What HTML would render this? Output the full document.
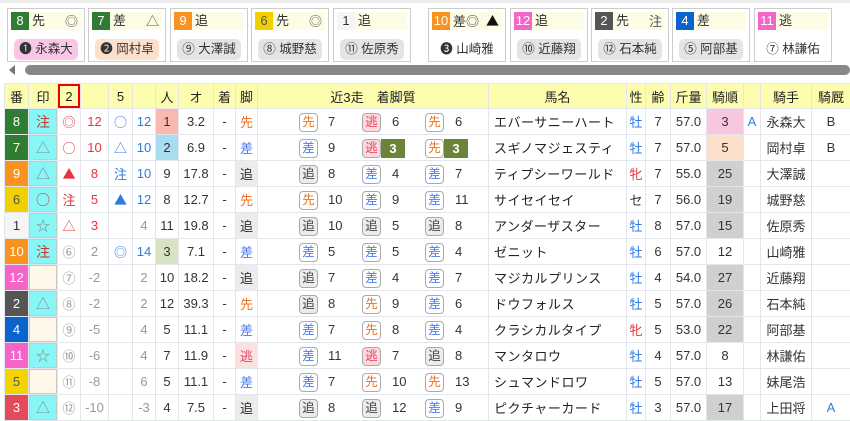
<!DOCTYPE html>
<html><head><meta charset="utf-8"><style>
*{box-sizing:border-box;margin:0;padding:0}
body{width:850px;height:420px;overflow:hidden;background:#fff;font-family:"Liberation Sans","Noto Sans CJK JP",sans-serif;color:#333;position:relative;font-size:13px}
.j{font-family:"Noto Sans CJK JP",sans-serif}
.topline{position:absolute;left:0;top:0;width:850px;height:3px;background:#eee}
.card{position:absolute;top:8px;width:78px;height:54px;border:1px solid #ccc;background:#fff}
.card .hd{position:absolute;left:3px;top:3px;width:70px;height:18px;background:#fdfde6;font-size:13px;line-height:18px}
.card .n{display:inline-block;width:18px;height:18px;text-align:center;color:#fff;margin-right:3px;vertical-align:top}
.card .m{position:absolute;right:3px;top:0;color:#555;font-family:"Noto Sans CJK JP",sans-serif}
.card .p{position:absolute;top:30px;left:0;right:0;margin:auto;width:fit-content;padding:0 5px;height:21px;line-height:21px;border-radius:5px;font-size:12.5px;color:#333}
.sb{position:absolute;left:25px;top:65px;width:825px;height:10px;background:#888;border-radius:5px}
.arr{position:absolute;left:9px;top:65px;width:0;height:0;border-top:5px solid transparent;border-bottom:5px solid transparent;border-right:6px solid #777}
table{position:absolute;left:4px;top:83px;border-collapse:collapse;table-layout:fixed;width:845px}
td,th{border:1px solid #e3e6ec;text-align:center;height:26px;padding:0;font-weight:normal;font-size:13px;white-space:nowrap;overflow:visible}
th{background:#fdfdb0;height:25px;color:#222}
td.nm{text-align:left;padding-left:5px;color:#222;letter-spacing:.5px}
td.g{color:#fff}
.mk{background:#86f6f6;box-shadow:inset 0 0 0 1px #b8d0c8;color:#888;font-family:"Noto Sans CJK JP",sans-serif;font-size:14px}
.mkb{background:#fdf8ea;box-shadow:inset 0 0 0 1px #cfc8b8}
.r{color:#e8323c}.b{color:#2f7ae5}.gr{color:#999}.o{color:#f07020}.bl{color:#4a7af0}.pk{color:#e04a6a}.bc{color:#c0392b}
.rc{position:relative}
.bd{position:absolute;top:4px;width:19px;height:19px;border:1px solid #aaa;border-radius:4px;line-height:17px;font-size:12.5px;background:#fff}
.bd.t{background:#ececec;color:#444}.bd.e{background:#fdd8dc;color:#e04a6a}.bd.s{color:#f07020}.bd.c{color:#4a7af0}
.num{position:absolute;top:0;line-height:26px}
.gb{position:absolute;top:4px;width:24px;height:19px;background:#6a843a;color:#fff;font-weight:bold;line-height:19px}
</style></head><body>
<div class="topline"></div>
<div class="card" style="left:7px"><div class="hd"><span class="n" style="background:#2e7d32">8</span>先<span class="m">◎</span></div><div class="p" style="background:#f9c6e6">❶ 永森大</div></div>
<div class="card" style="left:88px"><div class="hd"><span class="n" style="background:#2e7d32">7</span>差<span class="m">△</span></div><div class="p" style="background:#fde0cc">❷ 岡村卓</div></div>
<div class="card" style="left:170px"><div class="hd"><span class="n" style="background:#f7931e">9</span>追</div><div class="p" style="background:#e4e4e4">⑨ 大澤誠</div></div>
<div class="card" style="left:251px"><div class="hd"><span class="n" style="background:#f0d000;color:#555">6</span>先<span class="m">◎</span></div><div class="p" style="background:#e4e4e4">⑧ 城野慈</div></div>
<div class="card" style="left:333px"><div class="hd"><span class="n" style="background:#f5f5f5;color:#333">1</span>追</div><div class="p" style="background:#e4e4e4">⑪ 佐原秀</div></div>
<div class="card" style="left:428px"><div class="hd"><span class="n" style="background:#f7931e">10</span>差<span class="j">◎</span><span class="m" style="color:#111">▲</span></div><div class="p">❸ 山崎雅</div></div>
<div class="card" style="left:510px"><div class="hd"><span class="n" style="background:#f564c8">12</span>追</div><div class="p" style="background:#e4e4e4">⑩ 近藤翔</div></div>
<div class="card" style="left:591px"><div class="hd"><span class="n" style="background:#555">2</span>先<span class="m">注</span></div><div class="p" style="background:#e4e4e4">⑫ 石本純</div></div>
<div class="card" style="left:672px"><div class="hd"><span class="n" style="background:#0b63ce">4</span>差</div><div class="p" style="background:#e4e4e4">⑤ 阿部基</div></div>
<div class="card" style="left:754px"><div class="hd"><span class="n" style="background:#f564c8">11</span>逃</div><div class="p">⑦ 林謙佑</div></div>
<div class="arr"></div><div class="sb"></div>
<table>
<colgroup><col style="width:24px"><col style="width:29px"><col style="width:23px"><col style="width:28px"><col style="width:24px"><col style="width:23px"><col style="width:23px"><col style="width:35px"><col style="width:22px"><col style="width:22px"><col style="width:231px"><col style="width:138px"><col style="width:19px"><col style="width:25px"><col style="width:36px"><col style="width:37px"><col style="width:17px"><col style="width:51px"><col style="width:39px"></colgroup>
<tr><th>番</th><th>印</th><th style="box-shadow:inset 0 0 0 2px #e00">2</th><th></th><th>5</th><th></th><th>人</th><th>オ</th><th>着</th><th>脚</th><th>近3走　着脚質</th><th>馬名</th><th>性</th><th>齢</th><th>斤量</th><th>騎順</th><th></th><th>騎手</th><th>騎厩</th></tr>
<tr><td class="g" style="background:#2e7d32">8</td><td class="mk bc">注</td><td class="r j">◎</td><td class="r">12</td><td class="b j">○</td><td class="b">12</td><td style="background:#f9b9b0">1</td><td>3.2</td><td>-</td><td class="o">先</td><td class="rc"><div class="bd s" style="left:41px">先</div><div class="num" style="left:70px">7</div><div class="bd e" style="left:104px">逃</div><div class="num" style="left:134px">6</div><div class="bd s" style="left:167px">先</div><div class="num" style="left:197px">6</div></td><td class="nm">エバーサニーハート</td><td class="b">牡</td><td>7</td><td>57.0</td><td style="background:#f9c6e0">3</td><td class="b">A</td><td>永森大</td><td>B</td></tr>
<tr><td class="g" style="background:#2e7d32">7</td><td class="mk">△</td><td class="r j">○</td><td class="r">10</td><td class="b j">△</td><td class="b">10</td><td style="background:#a8dcf0">2</td><td>6.9</td><td>-</td><td class="bl">差</td><td class="rc"><div class="bd c" style="left:41px">差</div><div class="num" style="left:70px">9</div><div class="bd e" style="left:104px">逃</div><div class="gb" style="left:123px">3</div><div class="bd s" style="left:167px">先</div><div class="gb" style="left:186px">3</div></td><td class="nm">スギノマジェスティ</td><td class="b">牡</td><td>7</td><td>57.0</td><td style="background:#fde0cc">5</td><td></td><td>岡村卓</td><td>B</td></tr>
<tr><td class="g" style="background:#f7931e">9</td><td class="mk">△</td><td class="r j">▲</td><td class="r">8</td><td class="b">注</td><td class="b">10</td><td>9</td><td>17.8</td><td>-</td><td style="background:#ececec">追</td><td class="rc"><div class="bd t" style="left:41px">追</div><div class="num" style="left:70px">8</div><div class="bd c" style="left:104px">差</div><div class="num" style="left:134px">4</div><div class="bd c" style="left:167px">差</div><div class="num" style="left:197px">7</div></td><td class="nm">ティプシーワールド</td><td class="r">牝</td><td>7</td><td>55.0</td><td style="background:#d0d0d0">25</td><td></td><td>大澤誠</td><td></td></tr>
<tr><td style="background:#f0d000;color:#555">6</td><td class="mk bc">○</td><td class="r">注</td><td class="r">5</td><td class="b j">▲</td><td class="b">12</td><td>8</td><td>12.7</td><td>-</td><td class="o">先</td><td class="rc"><div class="bd s" style="left:41px">先</div><div class="num" style="left:70px">10</div><div class="bd c" style="left:104px">差</div><div class="num" style="left:134px">9</div><div class="bd c" style="left:167px">差</div><div class="num" style="left:197px">11</div></td><td class="nm">サイセイセイ</td><td>セ</td><td>7</td><td>56.0</td><td style="background:#d0d0d0">19</td><td></td><td>城野慈</td><td></td></tr>
<tr><td style="background:#f5f5f5">1</td><td class="mk">☆</td><td class="r j">△</td><td class="r">3</td><td></td><td class="gr">4</td><td>11</td><td>19.8</td><td>-</td><td style="background:#ececec">追</td><td class="rc"><div class="bd t" style="left:41px">追</div><div class="num" style="left:70px">10</div><div class="bd t" style="left:104px">追</div><div class="num" style="left:134px">5</div><div class="bd t" style="left:167px">追</div><div class="num" style="left:197px">8</div></td><td class="nm">アンダーザスター</td><td class="b">牡</td><td>8</td><td>57.0</td><td style="background:#d0d0d0">15</td><td></td><td>佐原秀</td><td></td></tr>
<tr><td class="g" style="background:#f7931e">10</td><td class="mk bc">注</td><td class="gr">⑥</td><td class="gr">2</td><td class="b j">◎</td><td class="b">14</td><td style="background:#d7e3c3">3</td><td>7.1</td><td>-</td><td class="bl">差</td><td class="rc"><div class="bd c" style="left:41px">差</div><div class="num" style="left:70px">5</div><div class="bd c" style="left:104px">差</div><div class="num" style="left:134px">5</div><div class="bd c" style="left:167px">差</div><div class="num" style="left:197px">4</div></td><td class="nm">ゼニット</td><td class="b">牡</td><td>6</td><td>57.0</td><td>12</td><td></td><td>山崎雅</td><td></td></tr>
<tr><td class="g" style="background:#f564c8">12</td><td class="mkb"></td><td class="gr">⑦</td><td class="gr">-2</td><td></td><td class="gr">2</td><td>10</td><td>18.2</td><td>-</td><td style="background:#ececec">追</td><td class="rc"><div class="bd t" style="left:41px">追</div><div class="num" style="left:70px">7</div><div class="bd c" style="left:104px">差</div><div class="num" style="left:134px">4</div><div class="bd c" style="left:167px">差</div><div class="num" style="left:197px">7</div></td><td class="nm">マジカルプリンス</td><td class="b">牡</td><td>4</td><td>54.0</td><td style="background:#d0d0d0">27</td><td></td><td>近藤翔</td><td></td></tr>
<tr><td class="g" style="background:#555">2</td><td class="mk">△</td><td class="gr">⑧</td><td class="gr">-2</td><td></td><td class="gr">2</td><td>12</td><td>39.3</td><td>-</td><td class="o">先</td><td class="rc"><div class="bd t" style="left:41px">追</div><div class="num" style="left:70px">8</div><div class="bd s" style="left:104px">先</div><div class="num" style="left:134px">9</div><div class="bd c" style="left:167px">差</div><div class="num" style="left:197px">6</div></td><td class="nm">ドウフォルス</td><td class="b">牡</td><td>5</td><td>57.0</td><td style="background:#d0d0d0">26</td><td></td><td>石本純</td><td></td></tr>
<tr><td class="g" style="background:#0b63ce">4</td><td class="mkb"></td><td class="gr">⑨</td><td class="gr">-5</td><td></td><td class="gr">4</td><td>5</td><td>11.1</td><td>-</td><td class="bl">差</td><td class="rc"><div class="bd c" style="left:41px">差</div><div class="num" style="left:70px">7</div><div class="bd s" style="left:104px">先</div><div class="num" style="left:134px">8</div><div class="bd c" style="left:167px">差</div><div class="num" style="left:197px">4</div></td><td class="nm">クラシカルタイプ</td><td class="r">牝</td><td>5</td><td>53.0</td><td style="background:#d0d0d0">22</td><td></td><td>阿部基</td><td></td></tr>
<tr><td class="g" style="background:#f564c8">11</td><td class="mk">☆</td><td class="gr">⑩</td><td class="gr">-6</td><td></td><td class="gr">4</td><td>7</td><td>11.9</td><td>-</td><td class="pk" style="background:#fde0e0">逃</td><td class="rc"><div class="bd c" style="left:41px">差</div><div class="num" style="left:70px">11</div><div class="bd e" style="left:104px">逃</div><div class="num" style="left:134px">7</div><div class="bd t" style="left:167px">追</div><div class="num" style="left:197px">8</div></td><td class="nm">マンタロウ</td><td class="b">牡</td><td>4</td><td>57.0</td><td>8</td><td></td><td>林謙佑</td><td></td></tr>
<tr><td style="background:#f4d400;color:#555">5</td><td class="mkb"></td><td class="gr">⑪</td><td class="gr">-8</td><td></td><td class="gr">6</td><td>5</td><td>11.1</td><td>-</td><td class="bl">差</td><td class="rc"><div class="bd c" style="left:41px">差</div><div class="num" style="left:70px">7</div><div class="bd s" style="left:104px">先</div><div class="num" style="left:134px">10</div><div class="bd s" style="left:167px">先</div><div class="num" style="left:197px">13</div></td><td class="nm">シュマンドロワ</td><td class="b">牡</td><td>5</td><td>57.0</td><td>13</td><td></td><td>妹尾浩</td><td></td></tr>
<tr><td class="g" style="background:#e74a5a">3</td><td class="mk">△</td><td class="gr">⑫</td><td class="gr">-10</td><td></td><td class="gr">-3</td><td>4</td><td>7.5</td><td>-</td><td style="background:#ececec">追</td><td class="rc"><div class="bd t" style="left:41px">追</div><div class="num" style="left:70px">8</div><div class="bd t" style="left:104px">追</div><div class="num" style="left:134px">12</div><div class="bd c" style="left:167px">差</div><div class="num" style="left:197px">9</div></td><td class="nm">ピクチャーカード</td><td class="b">牡</td><td>3</td><td>57.0</td><td style="background:#d0d0d0">17</td><td></td><td>上田将</td><td class="b">A</td></tr>
</table>
</body></html>
